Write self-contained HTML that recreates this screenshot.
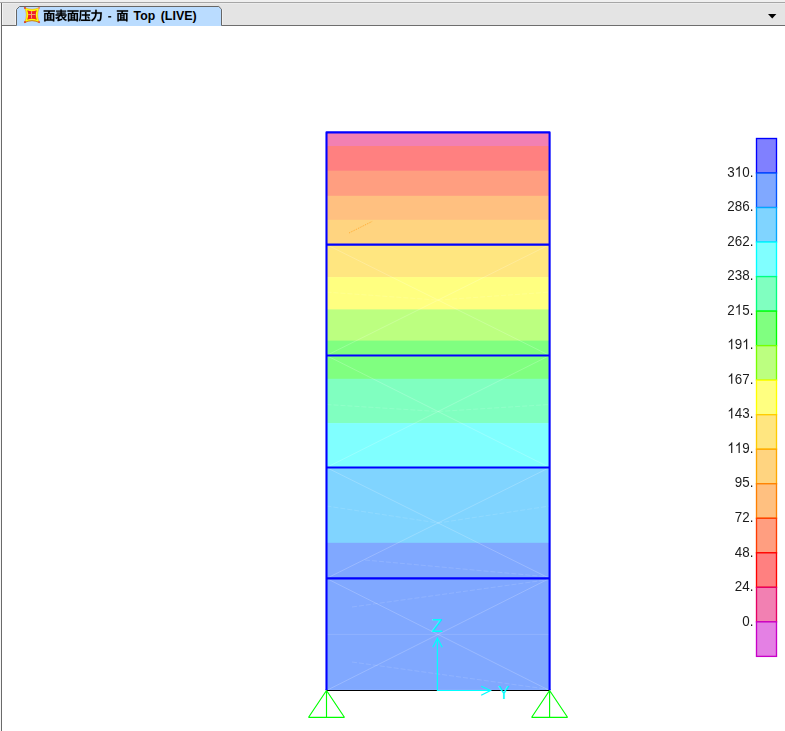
<!DOCTYPE html>
<html><head><meta charset="utf-8"><title>view</title>
<style>
html,body{margin:0;padding:0;background:#fff;}
body{width:785px;height:731px;overflow:hidden;position:relative;font-family:"Liberation Sans",sans-serif;}
svg{position:absolute;left:0;top:0;}
svg text{font-family:"Liberation Sans",sans-serif;}
#lab{will-change:transform;}
</style></head><body>
<svg width="785" height="731" viewBox="0 0 785 731">
<rect x="0" y="0" width="785" height="731" fill="#ffffff"/>
<rect x="0" y="0" width="785" height="2" fill="#f0f0f0"/>
<rect x="0" y="2" width="785" height="1" fill="#a6a6a6"/>
<rect x="2" y="3" width="783" height="22" fill="#e4e4e4"/>
<rect x="2" y="3" width="783" height="1" fill="#ececec"/>
<rect x="0" y="3" width="1" height="728" fill="#f6f6f6"/>
<rect x="1" y="3" width="1" height="728" fill="#6a6a6a"/>
<rect x="2" y="3" width="1" height="22" fill="#f4f4f4"/>
<rect x="15" y="9" width="1" height="16" fill="#f2f2f2"/>
<rect x="2" y="25" width="783" height="1" fill="#6e6e6e"/>
<rect x="222" y="9" width="1" height="16" fill="#efefef"/>
<path d="M16.5 26V9.5L19.5 6.5H218.8L221.5 9.2V26Z" fill="#badcff"/>
<path d="M16.5 25.5V9.5L19.5 6.5H218.8L221.5 9.2V25.5" fill="none" stroke="#666" stroke-width="1"/>
<path d="M768 14H776.4L772.2 18.4Z" fill="#000"/>
<g transform="translate(24 7)">
<path d="M0.3 0.3Q8 4.4 15.7 0.3Q11.6 8 15.7 15.7Q8 11.6 0.3 15.7Q4.4 8 0.3 0.3Z" fill="#ffff00" stroke="#e8862a" stroke-width="0.5"/>
<path d="M0.3 15.7Q8 11.6 15.7 15.7" fill="none" stroke="#b86a10" stroke-width="0.7"/>
<path d="M3.2 3.2Q8 5.2 12.8 3.2Q10.8 8 12.8 12.8Q8 10.8 3.2 12.8Q5.2 8 3.2 3.2Z" fill="#ee2222"/>
<path d="M7.5 4.2V11.4M4.2 7.5H11.4" stroke="#f8a6b0" stroke-width="0.8"/>
<rect x="7" y="7" width="1.1" height="1.1" fill="#ffe000"/>
<circle cx="1" cy="1" r="0.9" fill="#dc2a2a"/><circle cx="15" cy="1" r="0.9" fill="#f08080"/><circle cx="1" cy="15" r="0.9" fill="#dc2a2a"/><circle cx="15" cy="15" r="0.9" fill="#e84a4a"/>
</g>
<g fill="#000" stroke="#000" stroke-width="8"><path transform="translate(43.00 20.25) scale(0.0125 -0.0125)" d="M416 315H570V240H416ZM416 409V479H570V409ZM416 146H570V72H416ZM50 792V679H416C412 649 406 618 401 589H91V-90H207V-39H786V-90H908V589H526L554 679H954V792ZM207 72V479H309V72ZM786 72H678V479H786Z"/><path transform="translate(54.85 20.25) scale(0.0125 -0.0125)" d="M235 -89C265 -70 311 -56 597 30C590 55 580 104 577 137L361 78V248C408 282 452 320 490 359C566 151 690 4 898 -66C916 -34 951 14 977 39C887 64 811 106 750 160C808 193 873 236 930 277L830 351C792 314 735 270 682 234C650 275 624 320 604 370H942V472H558V528H869V623H558V676H908V777H558V850H437V777H99V676H437V623H149V528H437V472H56V370H340C253 301 133 240 21 205C46 181 82 136 99 108C145 125 191 146 236 170V97C236 53 208 29 185 17C204 -7 228 -60 235 -89Z"/><path transform="translate(66.70 20.25) scale(0.0125 -0.0125)" d="M416 315H570V240H416ZM416 409V479H570V409ZM416 146H570V72H416ZM50 792V679H416C412 649 406 618 401 589H91V-90H207V-39H786V-90H908V589H526L554 679H954V792ZM207 72V479H309V72ZM786 72H678V479H786Z"/><path transform="translate(78.55 20.25) scale(0.0125 -0.0125)" d="M676 265C732 219 793 152 821 107L909 176C879 220 818 279 761 323ZM104 804V477C104 327 98 117 20 -27C48 -38 98 -73 119 -93C204 64 218 312 218 478V689H965V804ZM512 654V472H260V358H512V60H198V-54H953V60H635V358H916V472H635V654Z"/><path transform="translate(90.40 20.25) scale(0.0125 -0.0125)" d="M382 848V641H75V518H377C360 343 293 138 44 3C73 -19 118 -65 138 -95C419 64 490 310 506 518H787C772 219 752 87 720 56C707 43 695 40 674 40C647 40 588 40 525 45C548 11 565 -43 566 -79C627 -81 690 -82 727 -76C771 -71 800 -60 830 -22C875 32 894 183 915 584C916 600 917 641 917 641H510V848Z"/><path transform="translate(116.20 20.25) scale(0.0125 -0.0125)" d="M416 315H570V240H416ZM416 409V479H570V409ZM416 146H570V72H416ZM50 792V679H416C412 649 406 618 401 589H91V-90H207V-39H786V-90H908V589H526L554 679H954V792ZM207 72V479H309V72ZM786 72H678V479H786Z"/></g><rect x="108.2" y="16.1" width="3" height="1.4" fill="#000"/><text id="t1" x="133.6" y="19.95" font-size="12.6" font-weight="bold" fill="#000" textLength="21.6" lengthAdjust="spacingAndGlyphs">Top</text><text id="t2" x="160.7" y="19.95" font-size="12.6" font-weight="bold" fill="#000" textLength="36" lengthAdjust="spacingAndGlyphs">(LIVE)</text>
<rect x="326.5" y="132.4" width="223.10000000000002" height="14.10" fill="#f280b2"/><rect x="326.5" y="146" width="223.10000000000002" height="25.20" fill="#ff8080"/><rect x="326.5" y="170.7" width="223.10000000000002" height="25.60" fill="#ff9e80"/><rect x="326.5" y="195.8" width="223.10000000000002" height="24.50" fill="#ffc080"/><rect x="326.5" y="219.8" width="223.10000000000002" height="25.30" fill="#ffd480"/><rect x="326.5" y="244.6" width="223.10000000000002" height="33.00" fill="#ffe680"/><rect x="326.5" y="277.1" width="223.10000000000002" height="32.80" fill="#ffff80"/><rect x="326.5" y="309.4" width="223.10000000000002" height="31.70" fill="#bcff80"/><rect x="326.5" y="340.6" width="223.10000000000002" height="38.70" fill="#80ff80"/><rect x="326.5" y="378.8" width="223.10000000000002" height="44.80" fill="#80ffc0"/><rect x="326.5" y="423.1" width="223.10000000000002" height="44.90" fill="#80ffff"/><rect x="326.5" y="467.5" width="223.10000000000002" height="75.80" fill="#80d4ff"/><rect x="326.5" y="542.8" width="223.10000000000002" height="148.20" fill="#80a8ff"/><g stroke="#ffffff" stroke-opacity="0.2" stroke-width="1" fill="none"><path d="M326.5 244.6L549.6 355.5M549.6 244.6L326.5 355.5"/><path d="M326.5 355.5L549.6 467.5M549.6 355.5L326.5 467.5"/><path d="M326.5 467.5L549.6 578.4M549.6 467.5L326.5 578.4"/><path d="M326.5 578.4L549.6 690.5M549.6 578.4L326.5 690.5"/><path d="M326.5 634.4H549.6" stroke-opacity="0.13"/></g><g stroke="#ffffff" stroke-opacity="0.12" stroke-width="1" fill="none" stroke-dasharray="5 2"><path d="M326.5 292.1L438.1 300.1L549.6 292.1"/><path d="M326.5 404.5L438.1 411.5L549.6 404.5"/><path d="M326.5 506.0L438.1 523.0L549.6 506.0"/><path d="M352 607L549.6 579.5M352 662L549.6 689.5M365 560L549.6 577"/></g><path d="M349 233L372.4 221.3" stroke="#ffa62a" stroke-width="0.9" stroke-dasharray="1 1" fill="none"/><path d="M326.5 690.5L326.5 132.4L549.6 132.4L549.6 690.5M326.5 244.6L549.6 244.6M326.5 355.5L549.6 355.5M326.5 467.5L549.6 467.5M326.5 578.4L549.6 578.4" stroke="#0000ff" stroke-width="2.1" fill="none" stroke-linejoin="round"/><rect x="325.5" y="689.95" width="225.10000000000002" height="1.1" fill="#fff"/><line x1="326.5" y1="690.5" x2="549.6" y2="690.5" stroke="#000" stroke-width="1.1"/><rect x="325.45" y="689.5" width="2.1" height="0.6" fill="#0000ff"/><rect x="548.5500000000001" y="689.5" width="2.1" height="0.6" fill="#0000ff"/><path d="M326.5 690.5L308.6 717.3L344.4 717.3ZM326.5 690.5L326.5 717.3" stroke="#00ff00" stroke-width="1.15" fill="none" stroke-linejoin="bevel"/><path d="M549.6 690.5L531.7 717.3L567.5 717.3ZM549.6 690.5L549.6 717.3" stroke="#00ff00" stroke-width="1.15" fill="none" stroke-linejoin="bevel"/><path d="M437.4 638L437.4 690.5L490.6 690.5M432.8 647.3L437.4 638L442.2 647.3M481.2 686.2L490.6 690.5L481.2 695.3" stroke="#00ffff" stroke-width="1.2" fill="none"/><text x="431.2" y="632" font-size="17.5" fill="#00ffff" textLength="11.3" lengthAdjust="spacingAndGlyphs">Z</text><text x="497.8" y="699" font-size="17.5" fill="#00ffff">Y</text><rect x="756.5" y="138.50" width="20.0" height="34.53" fill="#8080ff" stroke="#0000ff" stroke-width="1.35"/><rect x="756.5" y="173.03" width="20.0" height="34.53" fill="#80a8ff" stroke="#0054ff" stroke-width="1.35"/><rect x="756.5" y="207.55" width="20.0" height="34.52" fill="#80d4ff" stroke="#00a8ff" stroke-width="1.35"/><rect x="756.5" y="242.07" width="20.0" height="34.53" fill="#80ffff" stroke="#00ffff" stroke-width="1.35"/><rect x="756.5" y="276.60" width="20.0" height="34.52" fill="#80ffc0" stroke="#00ff80" stroke-width="1.35"/><rect x="756.5" y="311.12" width="20.0" height="34.52" fill="#80ff80" stroke="#00ff00" stroke-width="1.35"/><rect x="756.5" y="345.65" width="20.0" height="34.52" fill="#bcff80" stroke="#78ff00" stroke-width="1.35"/><rect x="756.5" y="380.17" width="20.0" height="34.53" fill="#ffff80" stroke="#ffff00" stroke-width="1.35"/><rect x="756.5" y="414.70" width="20.0" height="34.52" fill="#ffe680" stroke="#ffcc00" stroke-width="1.35"/><rect x="756.5" y="449.22" width="20.0" height="34.53" fill="#ffd480" stroke="#ffa800" stroke-width="1.35"/><rect x="756.5" y="483.75" width="20.0" height="34.52" fill="#ffc080" stroke="#ff8000" stroke-width="1.35"/><rect x="756.5" y="518.27" width="20.0" height="34.52" fill="#ff9e80" stroke="#ff3c00" stroke-width="1.35"/><rect x="756.5" y="552.80" width="20.0" height="34.53" fill="#ff8080" stroke="#ff0000" stroke-width="1.35"/><rect x="756.5" y="587.33" width="20.0" height="34.52" fill="#f280b2" stroke="#e60064" stroke-width="1.35"/><rect x="756.5" y="621.85" width="20.0" height="34.53" fill="#e480e4" stroke="#c800c8" stroke-width="1.35"/>
</svg>
<svg id="lab" width="785" height="731" viewBox="0 0 785 731">
<g transform="translate(753.4 176.72) scale(1 1.14)"><text x="-26.08 -11.18 -3.73" y="0" font-size="13.4" fill="#1c1c1c">30.</text><path transform="translate(-18.63 0) scale(0.006543 -0.006294)" d="M763 0H583V1147Q518 1085 412.5 1023Q307 961 223 930V1104Q374 1175 487 1276Q600 1377 647 1472H763Z" fill="#1c1c1c"/></g><g transform="translate(753.4 211.25) scale(1 1.14)"><text x="-26.08 -18.63 -11.18 -3.73" y="0" font-size="13.4" fill="#1c1c1c">286.</text></g><g transform="translate(753.4 245.77) scale(1 1.14)"><text x="-26.08 -18.63 -11.18 -3.73" y="0" font-size="13.4" fill="#1c1c1c">262.</text></g><g transform="translate(753.4 280.30) scale(1 1.14)"><text x="-26.08 -18.63 -11.18 -3.73" y="0" font-size="13.4" fill="#1c1c1c">238.</text></g><g transform="translate(753.4 314.82) scale(1 1.14)"><text x="-26.08 -11.18 -3.73" y="0" font-size="13.4" fill="#1c1c1c">25.</text><path transform="translate(-18.63 0) scale(0.006543 -0.006294)" d="M763 0H583V1147Q518 1085 412.5 1023Q307 961 223 930V1104Q374 1175 487 1276Q600 1377 647 1472H763Z" fill="#1c1c1c"/></g><g transform="translate(753.4 349.35) scale(1 1.14)"><text x="-18.63 -3.73" y="0" font-size="13.4" fill="#1c1c1c">9.</text><path transform="translate(-26.08 0) scale(0.006543 -0.006294)" d="M763 0H583V1147Q518 1085 412.5 1023Q307 961 223 930V1104Q374 1175 487 1276Q600 1377 647 1472H763Z" fill="#1c1c1c"/><path transform="translate(-11.18 0) scale(0.006543 -0.006294)" d="M763 0H583V1147Q518 1085 412.5 1023Q307 961 223 930V1104Q374 1175 487 1276Q600 1377 647 1472H763Z" fill="#1c1c1c"/></g><g transform="translate(753.4 383.87) scale(1 1.14)"><text x="-18.63 -11.18 -3.73" y="0" font-size="13.4" fill="#1c1c1c">67.</text><path transform="translate(-26.08 0) scale(0.006543 -0.006294)" d="M763 0H583V1147Q518 1085 412.5 1023Q307 961 223 930V1104Q374 1175 487 1276Q600 1377 647 1472H763Z" fill="#1c1c1c"/></g><g transform="translate(753.4 418.40) scale(1 1.14)"><text x="-18.63 -11.18 -3.73" y="0" font-size="13.4" fill="#1c1c1c">43.</text><path transform="translate(-26.08 0) scale(0.006543 -0.006294)" d="M763 0H583V1147Q518 1085 412.5 1023Q307 961 223 930V1104Q374 1175 487 1276Q600 1377 647 1472H763Z" fill="#1c1c1c"/></g><g transform="translate(753.4 452.92) scale(1 1.14)"><text x="-11.18 -3.73" y="0" font-size="13.4" fill="#1c1c1c">9.</text><path transform="translate(-26.08 0) scale(0.006543 -0.006294)" d="M763 0H583V1147Q518 1085 412.5 1023Q307 961 223 930V1104Q374 1175 487 1276Q600 1377 647 1472H763Z" fill="#1c1c1c"/><path transform="translate(-18.63 0) scale(0.006543 -0.006294)" d="M763 0H583V1147Q518 1085 412.5 1023Q307 961 223 930V1104Q374 1175 487 1276Q600 1377 647 1472H763Z" fill="#1c1c1c"/></g><g transform="translate(753.4 487.45) scale(1 1.14)"><text x="-18.63 -11.18 -3.73" y="0" font-size="13.4" fill="#1c1c1c">95.</text></g><g transform="translate(753.4 521.98) scale(1 1.14)"><text x="-18.63 -11.18 -3.73" y="0" font-size="13.4" fill="#1c1c1c">72.</text></g><g transform="translate(753.4 556.50) scale(1 1.14)"><text x="-18.63 -11.18 -3.73" y="0" font-size="13.4" fill="#1c1c1c">48.</text></g><g transform="translate(753.4 591.03) scale(1 1.14)"><text x="-18.63 -11.18 -3.73" y="0" font-size="13.4" fill="#1c1c1c">24.</text></g><g transform="translate(753.4 625.55) scale(1 1.14)"><text x="-11.18 -3.73" y="0" font-size="13.4" fill="#1c1c1c">0.</text></g>
</svg>
</body></html>
